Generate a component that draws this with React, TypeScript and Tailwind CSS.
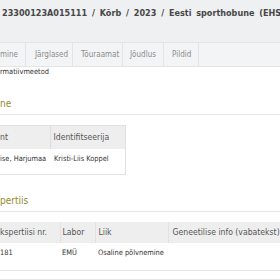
const tabs = [
  { label: "mine", width: "w-[26px]", pad: "pl-0" },
  { label: "Järglased", width: "w-[47px]", pad: "pl-[9px]" },
  { label: "Tõuraamat", width: "w-[50px]", pad: "pl-[8px]" },
  { label: "Jõudlus", width: "w-[41px]", pad: "pl-[7px]" },
  { label: "Pildid", width: "w-[35px]", pad: "pl-[8px]" },
];

function SectionTitle({ children }: { children: string }) {
  return (
    <h2 className="border-b border-[#e6e6e6] h-[17px] text-[10px] leading-[12px] text-[#948b32] font-['Liberation_Sans_Narrow','DejaVu_Sans_Condensed',sans-serif] whitespace-nowrap">
      {children}
    </h2>
  );
}

export default function App() {
  return (
    <div className="w-[280px] h-[280px] overflow-hidden bg-white text-[#333] font-['DejaVu_Sans_Condensed','DejaVu_Sans',sans-serif]">
      {/* title bar */}
      <div className="bg-[#eef0f2] h-[42px] pt-[8px] pl-[2px]">
        <h1 className="whitespace-nowrap text-[9px] leading-[11px] font-bold text-[#474747] [word-spacing:2px]">
          23300123A015111 / Kõrb / 2023 / Eesti sporthobune (EHS)
        </h1>
      </div>

      {/* tabs */}
      <div className="flex h-[25px] bg-[#f3f4f5] border-y border-[#e2e4e6] font-['Liberation_Sans_Narrow','DejaVu_Sans_Condensed',sans-serif] text-[8px] text-[#8c8c8c]">
        {tabs.map(({ label, width, pad }) => (
          <a
            key={label}
            href="#"
            className={`${width} ${pad} flex items-center border-r border-[#e2e4e6] whitespace-nowrap`}
          >
            {label}
          </a>
        ))}
      </div>

      {/* content */}
      <div>
        <p className="text-[7.4px] leading-[10px] whitespace-nowrap">rmatiivmeetod</p>

        <div className="mt-[21px]">
          <SectionTitle>ne</SectionTitle>
        </div>

        <table className="mt-[10px] w-[126px] border border-l-0 border-[#e0e0e0] border-collapse">
          <thead>
            <tr className="bg-[#eeeeee] h-[23px] text-[8.6px] text-[#555]">
              <th className="w-[50px] text-left font-normal border-r border-[#dedede]">nt</th>
              <th className="text-left font-normal pl-[3px]">Identifitseerija</th>
            </tr>
          </thead>
          <tbody>
            <tr className="h-[26px] align-top text-[7.4px]">
              <td className="pt-[4px] whitespace-nowrap">ise, Harjumaa</td>
              <td className="pt-[4px] pl-[4px] whitespace-nowrap">Kristi-Liis Koppel</td>
            </tr>
          </tbody>
        </table>

        <div className="mt-[20px]">
          <SectionTitle>pertiis</SectionTitle>
        </div>

        <table className="mt-[10px] w-[400px] border-b border-[#e6e6e6] border-collapse">
          <thead>
            <tr className="bg-[#eeeeee] h-[21px] text-[8.6px] text-[#555]">
              <th className="w-[60px] text-left font-normal border-r border-[#e2e2e2] whitespace-nowrap">kspertiisi nr.</th>
              <th className="w-[35px] text-left font-normal pl-[2px] border-r border-[#e2e2e2]">Labor</th>
              <th className="w-[73px] text-left font-normal pl-[3px] border-r border-[#e2e2e2]">Liik</th>
              <th className="text-left font-normal pl-[4px] whitespace-nowrap">Geneetilise info (vabatekst)</th>
            </tr>
          </thead>
          <tbody>
            <tr className="h-[27px] align-top text-[7.4px]">
              <td className="pt-[4px]">181</td>
              <td className="pt-[4px] pl-[2px]">EMÜ</td>
              <td className="pt-[4px] pl-[3px] whitespace-nowrap">Osaline põlvnemine</td>
              <td></td>
            </tr>
          </tbody>
        </table>
        <div className="mt-[8px] border-t border-[#e6e6e6]"></div>
      </div>
    </div>
  );
}
